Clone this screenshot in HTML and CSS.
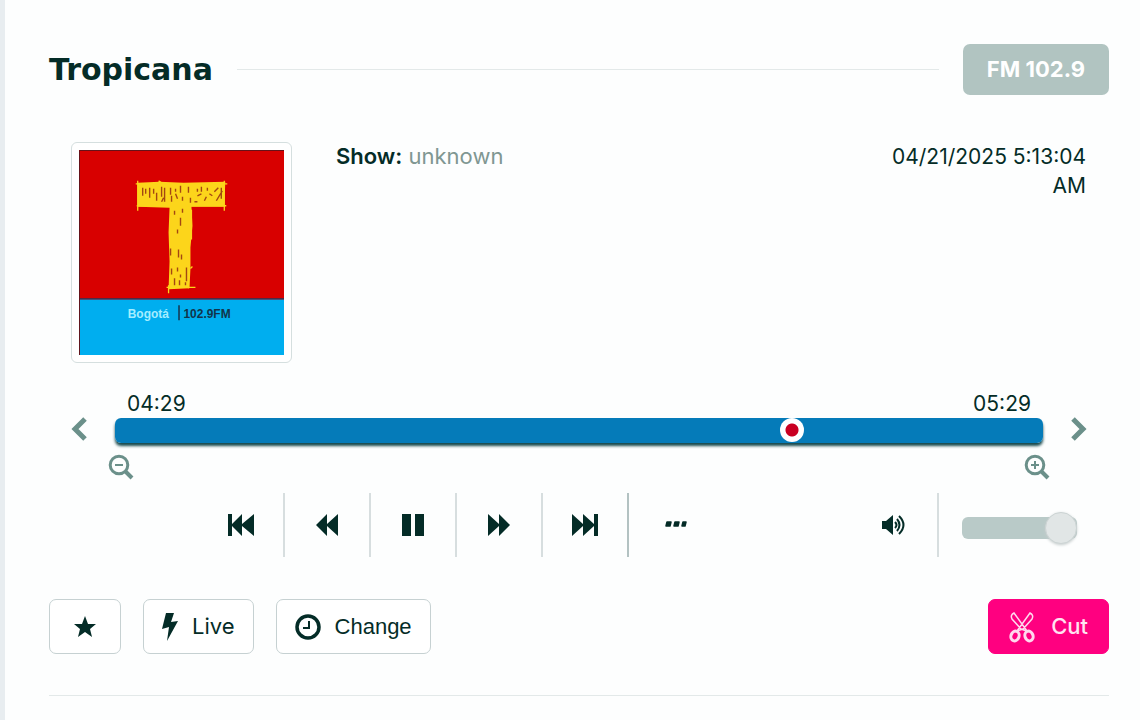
FILE: index.html
```html
<!DOCTYPE html>
<html lang="en">
<head>
  <meta charset="UTF-8">
  <meta name="viewport" content="width=device-width, initial-scale=1.0">
  <title>Tropicana</title>
  <link rel="stylesheet" href="styles.css">
</head>
<body>
  <main class="player">
    <header class="header">
      <h1>Tropicana</h1>
      <span class="line"></span>
      <span class="badge">FM 102.9</span>
    </header>

    <section class="info">
      <div class="cover">
        <svg viewBox="0 0 206 206" role="img" aria-label="Tropicana logo">
          <rect width="206" height="206" fill="#d80000"/>
          <rect y="150" width="206" height="56" fill="#00aeef"/>
          <path d="M0 149.500H206" stroke="#4b2a48" stroke-width="1.500"/>
          <path d="M.5 206V.5H206" fill="none" stroke="#64131a"/>
          <path d="M59 33L81 32L105 33L147 32L146 57L113 57L114 76L112 98L112 119L111 139L90 140L91 112L90 83L91 58L59 57Z" fill="#fcd51b"/>
          <path d="M57 34H149M58 56H148M59 31V61M146 31V61M80 31L83 33M88 138H117M90 136V144M110 118V139M113 60V90M112 119L114 117" fill="none" stroke="#fcd51b" stroke-width="1.300"/>
          <path d="M64 38V46M67 39V44M71 38V48M75 39V44M78 43V51M83 37V47M86 38V52M92 38V45M97 39V42M102 36V43M110 37V43M119 39V42M123 37V42M129 38V41M136 42L140 38M83 52L85 48M93 46V52M97 44L99 49M104 47V51M112 48V53M119 46L123 44M126 51L128 47M138 51L144 41M143 38V49M131 44L134 46M116 52H119M96 61V65M104 59V63M102 68V76M99 80V84M92 99V106M100 100V108M103 105V110M93 119V125M99 118V122M108 118V132M96 129V136M102 125V128M101 131V136M107 133V136" fill="none" stroke="#a34713" stroke-width="1.400"/>
          <path d="M100.500 156V171" stroke="#17334a" stroke-width="1.500"/>
          <text x="49" y="169" class="cover-city">Bogotá</text>
          <text x="105" y="169" class="cover-freq">102.9FM</text>
        </svg>
      </div>
      <p class="show"><b>Show:</b> <span>unknown</span></p>
      <time class="date">04/21/2025 5:13:04 AM</time>
    </section>

    <section class="timeline">
      <button class="arrow" aria-label="Earlier">
        <svg class="outline" width="16" height="24" viewBox="0 0 16 24"><path d="M14 2L4 12L14 22" stroke-width="5"/></svg>
      </button>
      <div class="bar">
        <div class="times"><span>04:29</span><span>05:29</span></div>
        <input class="seek" type="range" min="0" max="1000" value="736" aria-label="Position">
      </div>
      <button class="arrow next" aria-label="Later">
        <svg class="outline" width="16" height="24" viewBox="0 0 16 24"><path d="M2 2L12 12L2 22" stroke-width="5"/></svg>
      </button>
    </section>
    <div class="zooms">
      <button aria-label="Zoom out">
        <svg class="outline" width="26" height="26" viewBox="0 0 26 26"><circle cx="11" cy="11" r="8.800" stroke-width="3"/><path d="M17.500 17.500L24 24" stroke-width="4"/><path d="M7 11H15" stroke-width="2"/></svg>
      </button>
      <button aria-label="Zoom in">
        <svg class="outline" width="26" height="26" viewBox="0 0 26 26"><circle cx="11" cy="11" r="8.800" stroke-width="3"/><path d="M17.500 17.500L24 24" stroke-width="4"/><path d="M7 11H15M11 7V15" stroke-width="2"/></svg>
      </button>
    </div>

    <section class="controls">
      <button aria-label="Previous">
        <svg width="26" height="22" viewBox="0 0 26 22"><path d="M0 0H4V10L14 0V10L26 0V22L14 12V22L4 12V22H0Z"/></svg>
      </button>
      <button aria-label="Rewind">
        <svg width="22" height="22" viewBox="0 0 22 22"><path d="M0 11L11 0V10L22 0V22L11 12V22Z"/></svg>
      </button>
      <button aria-label="Pause">
        <svg width="22" height="22" viewBox="0 0 22 22"><path d="M0 0H9V22H0ZM13 0H22V22H13Z"/></svg>
      </button>
      <button aria-label="Forward">
        <svg width="22" height="22" viewBox="0 0 22 22"><path d="M22 11L11 0V10L0 0V22L11 12V22Z"/></svg>
      </button>
      <button class="strong" aria-label="Next">
        <svg width="26" height="22" viewBox="0 0 26 22"><path d="M26 0H22V10L11 0V10L0 0V22L11 12V22L22 12V22H26Z"/></svg>
      </button>
      <button class="last" aria-label="More">
        <svg width="22" height="22" viewBox="0 0 22 22"><path d="M2 8H6L5 12H1ZM10 8H14L13 12H9ZM18 8H21L20 12H17Z" stroke="#042c27" stroke-width="1.500" stroke-linejoin="round"/></svg>
      </button>
      <button class="mute" aria-label="Mute">
        <svg width="26" height="22" viewBox="0 0 26 22"><path d="M1 7H5L12 1V21L5 15H1Z"/><path d="M14 8Q17 11 14 14M16 5Q21 11 16 17M18 2Q27 11 18 20" fill="none" stroke="#042c27" stroke-width="2"/></svg>
      </button>
      <input class="volume" type="range" min="0" max="100" value="100" aria-label="Volume">
    </section>

    <footer class="actions">
      <button class="btn star" aria-label="Favorite">
        <svg width="22" height="22" viewBox="0 0 22 22"><path d="M11 0L14 8H22L16 13L18 21L11 16L4 21L6 13L0 8H8Z"/></svg>
      </button>
      <button class="btn live">
        <svg width="16" height="30" viewBox="0 0 16 30"><path d="M4 1H12L9 10L16 9L5 29L7 15L0 17Z"/></svg>
        Live
      </button>
      <button class="btn change">
        <svg class="outline dark" width="26" height="26" viewBox="0 0 26 26"><circle cx="13" cy="13" r="11" stroke-width="3.500"/><path d="M14 7V14H8" stroke-width="2"/></svg>
        Change
      </button>
      <button class="btn cut">
        <svg class="outline light" width="26" height="32" viewBox="0 0 26 32"><ellipse cx="6" cy="25" rx="4" ry="5" stroke-width="3" transform="rotate(20 6 25)"/><ellipse cx="20" cy="25" rx="4" ry="5" stroke-width="3" transform="rotate(-20 20 25)"/><path d="M8 20L21 2Q25 4 23 8L14 18Z M18 20L5 2Q1 4 3 8L12 18Z" stroke-width="1.500"/></svg>
        Cut
      </button>
    </footer>
  </main>
</body>
</html>
```

FILE: styles.css
```css
*{
  box-sizing: border-box;
  margin: 0;
  padding: 0;
}
body{
  min-height: 100vh;
  border-left: 5px solid #e8edf0;
  background: #fdfefe;
  color: #042c27;
  font: 22px/29px Inter, sans-serif;
}
button{
  border: none;
  background: none;
  color: inherit;
  font: inherit;
  cursor: pointer;
}
svg{
  display: block;
  fill: #042c27;
}
.outline{
  fill: none;
  stroke: #6b908a;
}
.outline.dark{
  stroke: #042c27;
}
.outline.light{
  stroke: #ffd9ee;
}
.player{
  padding: 44px 31px 0 44px;
}
.header{
  display: flex;
  align-items: center;
  gap: 24px;
}
h1{
  font: bold 30px/36px "DejaVu Sans", sans-serif;
}
.line{
  flex: 1;
  height: 1px;
  background: #e3e9e9;
}
.badge{
  padding: 11px 24px;
  border-radius: 7px;
  background: #b1c4c1;
  color: #fff;
  font-weight: 700;
}
.info{
  display: flex;
  margin-top: 47px;
  padding: 0 23px 0 22px;
}
.cover{
  width: 221px;
  padding: 7px;
  border: 1px solid #d5dfdf;
  border-radius: 6px;
  background: #fff;
}
.cover-city, .cover-freq{
  font: bold 12px "Liberation Sans", sans-serif;
  fill: #a5edff;
}
.cover-freq{
  fill: #12344b;
}
.show{
  flex: 1;
  margin-left: 44px;
}
.show b{
  font-weight: 600;
}
.show span{
  color: #809792;
}
.date{
  width: 210px;
  font-size: 21px;
  text-align: right;
}

/* timeline */
.timeline{
  display: flex;
  align-items: flex-end;
  margin-top: 26px;
  padding: 0 22px;
}
.arrow{
  width: 44px;
  padding-bottom: 2px;
}
.arrow.next svg{
  margin-left: auto;
}
.bar{
  flex: 1;
}
.times{
  display: flex;
  justify-content: space-between;
  padding: 0 12px;
  font-size: 21px;
}
input[type="range"]{
  -webkit-appearance: none;
  appearance: none;
  display: block;
  background: none;
}
.seek{
  width: 100%;
  height: 25px;
  border-radius: 6px;
  box-shadow: 0 3px 3px #17494d;
}
.seek::-webkit-slider-runnable-track{
  height: 25px;
  border-radius: 6px;
  background: #057bb9;
}
.seek::-webkit-slider-thumb{
  -webkit-appearance: none;
  width: 24px;
  height: 24px;
  border-radius: 50%;
  background: radial-gradient(circle, #c90022 6px, #fff 7px);
}
.zooms{
  display: flex;
  justify-content: space-between;
  margin-top: 11px;
  padding: 0 59px;
}

/* playback buttons */
.controls{
  display: flex;
  align-items: center;
  margin-top: 13px;
  padding: 0 32px 0 150px;
}
.controls button{
  width: 86px;
  height: 64px;
  border-right: 2px solid #d7dedf;
}
.controls svg{
  margin: auto;
}
.controls .strong{
  border-color: #b3c2c2;
}
.controls .last{
  width: 94px;
  border: none;
}
.controls .mute{
  width: 88px;
  margin-left: auto;
}
.volume{
  width: 115px;
  height: 32px;
  margin: 6px 0 0 23px;
}
.volume::-webkit-slider-runnable-track{
  height: 22px;
  border-radius: 6px;
  background: #b9cac8;
}
.volume::-webkit-slider-thumb{
  -webkit-appearance: none;
  width: 32px;
  height: 32px;
  margin-top: -5px;
  border: 1px solid #ccd4d4;
  border-radius: 50%;
  background: #e1e6e6;
  box-shadow: 0 1px 3px #c5cccc;
}

.actions{
  display: flex;
  gap: 22px;
  margin-top: 42px;
  padding-bottom: 41px;
  border-bottom: 1px solid #e3e9e9;
}
.btn{
  display: flex;
  align-items: center;
  justify-content: center;
  height: 55px;
  padding: 0 18px;
  border: 1px solid #c6d1d2;
  border-radius: 7px;
  background: #fff;
}
.star{
  padding: 0 24px;
}
.live{
  gap: 14px;
}
.change{
  gap: 14px;
  font-family: "Liberation Sans", sans-serif;
}
.cut{
  gap: 16px;
  padding: 0 20px;
  margin-left: auto;
  border-color: #ff0080;
  background: #ff0080;
  color: #ffe3f1;
  font-weight: 500;
}
```
